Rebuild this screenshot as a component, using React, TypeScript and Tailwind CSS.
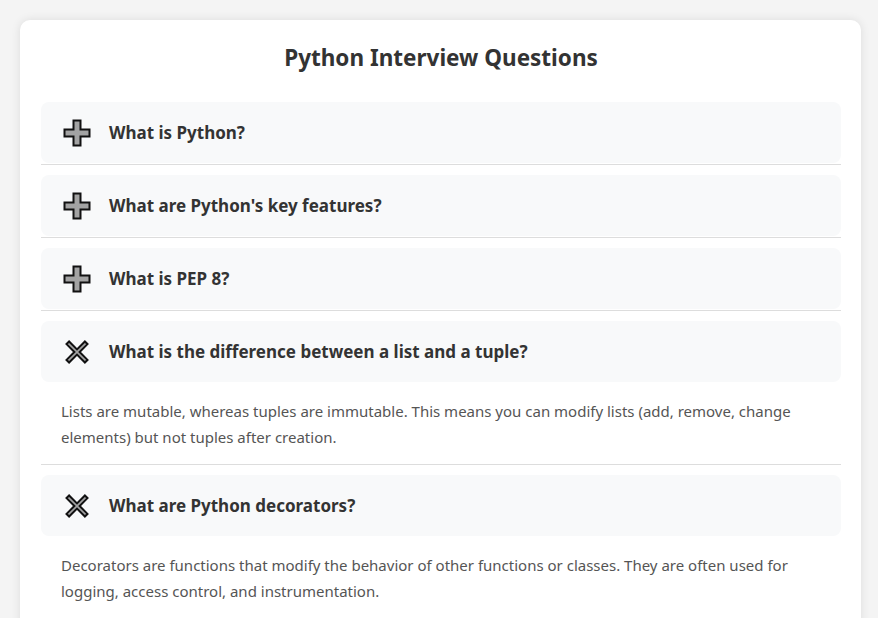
import { useState } from 'react';

interface Faq {
  q: string;
  a: string;
}

const faqs: Faq[] = [
  { q: 'What is Python?', a: 'Python is a high-level, interpreted programming language known for its readability and versatility.' },
  { q: "What are Python's key features?", a: 'Easy to learn syntax, dynamic typing, automatic memory management and a large standard library.' },
  { q: 'What is PEP 8?', a: 'PEP 8 is the style guide for Python code, describing conventions for writing readable code.' },
  {
    q: 'What is the difference between a list and a tuple?',
    a: 'Lists are mutable, whereas tuples are immutable. This means you can modify lists (add, remove, change elements) but not tuples after creation.',
  },
  {
    q: 'What are Python decorators?',
    a: 'Decorators are functions that modify the behavior of other functions or classes. They are often used for logging, access control, and instrumentation.',
  },
];

function PlusIcon() {
  return (
    <svg width="28" height="28" viewBox="0 0 28 28" className="shrink-0">
      <path
        d="M10.5 1.5h7v9h9v7h-9v9h-7v-9h-9v-7h9z"
        fill="#a3a3a3"
        stroke="#111"
        strokeWidth="2"
        strokeLinejoin="miter"
      />
    </svg>
  );
}

function CrossIcon() {
  return (
    <svg width="28" height="28" viewBox="0 0 28 28" className="shrink-0">
      <path
        d="M14 14m-2.6 0L3.5 6.1 6.1 3.5 14 11.4 21.9 3.5 24.5 6.1 16.6 14 24.5 21.9 21.9 24.5 14 16.6 6.1 24.5 3.5 21.9z"
        fill="#a3a3a3"
        stroke="#111"
        strokeWidth="2"
        strokeLinejoin="miter"
      />
    </svg>
  );
}

export default function App() {
  const [open, setOpen] = useState<Record<number, boolean>>({ 3: true, 4: true });

  return (
    <div className="min-h-screen bg-[#f4f4f4] px-5 pt-5 font-['Noto_Sans',sans-serif]">
      <div className="w-[841px] rounded-[10px] bg-white pb-5 pl-[21px] pr-5 pt-5 shadow-[0_0_10px_rgba(0,0,0,0.1)]">
        <h1 className="mb-[26px] text-center text-[22.5px] font-bold leading-[36px] text-[#333]">
          Python Interview Questions
        </h1>
        <div className="flex flex-col gap-[10px]">
          {faqs.map((f, i) => (
            <div key={i} className="border-b border-[#ddd]">
              <button
                onClick={() => setOpen(o => ({ ...o, [i]: !o[i] }))}
                className="mb-px flex h-[61px] w-full items-center gap-[18px] rounded-lg bg-[#f8f9fa] px-[22px] text-left"
              >
                {open[i] ? <CrossIcon /> : <PlusIcon />}
                <span className="text-[17px] font-bold text-[#333]">{f.q}</span>
              </button>
              {open[i] && (
                <div className="px-5 pb-[14px] pt-[15px] text-[15px] leading-[26px] text-[#555]">{f.a}</div>
              )}
            </div>
          ))}
        </div>
      </div>
    </div>
  );
}
